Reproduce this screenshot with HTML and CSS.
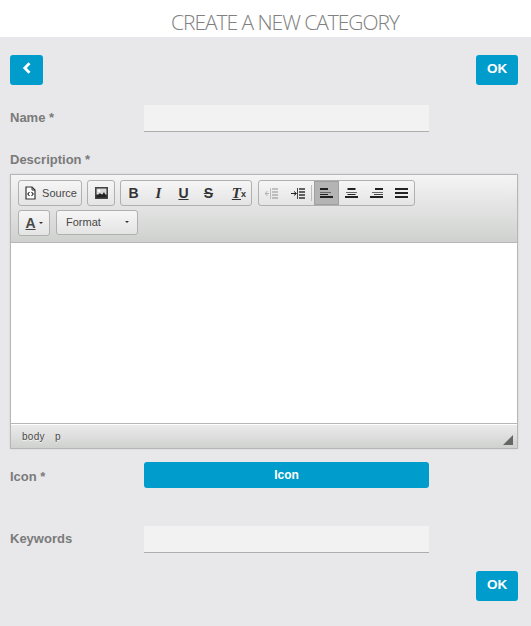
FILE: index.html
```html
<!DOCTYPE html>
<html lang="en">
<head>
<meta charset="utf-8">
<title>Create a new category</title>
<link rel="stylesheet" href="styles.css">
</head>
<body>
<header class="top"><h1 class="title">CREATE A NEW CATEGORY</h1></header>
<main class="page">
  <div class="actions">
    <button class="btn back" aria-label="Back"><svg width="10" height="12" viewBox="0 0 10 12"><path d="M7.500 1.200 2.800 6l4.700 4.800" fill="none" stroke="#fff" stroke-width="2.800"/></svg></button>
    <button class="btn ok">OK</button>
  </div>
  <div class="field name-row">
    <label class="label">Name *</label>
    <div class="input"></div>
  </div>
  <label class="label desc-label">Description *</label>
  <section class="editor">
    <div class="toolbar">
      <div class="row">
        <div class="group">
          <span class="tb source">
            <svg width="14" height="14" viewBox="0 0 14 14"><path d="M3 1h6l3 3v9H3z" fill="#fff" stroke="#333" stroke-width="1.200"/><path d="M9 1v3h3" fill="none" stroke="#333"/><path d="M6.500 6 4.800 8l1.700 2M8.500 6l1.700 2-1.700 2" fill="none" stroke="#222" stroke-width="1.100"/></svg>
            <span>Source</span>
          </span>
        </div>
        <div class="group">
          <span class="tb image">
            <svg width="13" height="12" viewBox="0 0 13 12"><rect x=".5" y=".5" width="12" height="11" fill="#333" stroke="#444"/><rect x="1.500" y="1.500" width="10" height="6" fill="#d8d8d8"/><circle cx="4" cy="3.800" r="1.300" fill="#fff"/><path d="M1.500 10 5 6l2 2 2-3 2.500 5z" fill="#222"/></svg>
          </span>
        </div>
        <div class="group">
          <span class="tb glyph b">B</span>
          <span class="tb glyph i">I</span>
          <span class="tb glyph u">U</span>
          <span class="tb glyph s">S</span>
          <span class="tb glyph tx"><span class="ti">T</span><span class="tsub">x</span></span>
        </div>
        <div class="group last">
          <span class="tb narrow">
            <svg width="14" height="11" viewBox="0 0 14 11" class="faded"><path d="M5.500 0v11" stroke="#777"/><path d="M7 1h6M7 4h6M7 7h6M7 10h6" stroke="#555" stroke-width="1.500"/><path d="M0 5.500h4" stroke="#555"/><path d="M2.500 3 0 5.500 2.500 8" fill="none" stroke="#555"/></svg>
          </span>
          <span class="tb narrow">
            <svg width="14" height="11" viewBox="0 0 14 11"><path d="M6.500 0v11" stroke="#444"/><path d="M8 1h6M8 4h6M8 7h6M8 10h6" stroke="#333" stroke-width="1.500"/><path d="M0 5.500h5" stroke="#222"/><path d="M3 3.500 5.500 5.500 3 7.500" fill="none" stroke="#222"/></svg>
          </span>
          <span class="sep"></span>
          <span class="tb al active">
            <svg width="13" height="10" viewBox="0 0 13 10"><path d="M0 1h8M0 9h13" stroke="#222" stroke-width="2"/><path d="M0 4.500h11" stroke="#666"/><path d="M0 6.500h8" stroke="#222"/></svg>
          </span>
          <span class="tb al">
            <svg width="13" height="10" viewBox="0 0 13 10"><path d="M2.500 1h8M0 9h13" stroke="#222" stroke-width="2"/><path d="M1 4.500h11" stroke="#666"/><path d="M2.500 6.500h8" stroke="#222"/></svg>
          </span>
          <span class="tb al">
            <svg width="13" height="10" viewBox="0 0 13 10"><path d="M5 1h8M0 9h13" stroke="#222" stroke-width="2"/><path d="M2 4.500h11" stroke="#666"/><path d="M4 6.500h9" stroke="#444"/></svg>
          </span>
          <span class="tb al">
            <svg width="13" height="10" viewBox="0 0 13 10"><path d="M0 1h13M0 5h13M0 9h13" stroke="#222" stroke-width="2"/></svg>
          </span>
        </div>
      </div>
      <div class="row row2">
        <div class="group">
          <span class="tb color"><span class="a">A</span><span class="caret"></span></span>
        </div>
        <div class="group combo">
          <span class="combo-text">Format</span><span class="caret"></span>
        </div>
      </div>
    </div>
    <div class="content"></div>
    <div class="status">
      <span class="crumb">body</span><span class="crumb">p</span>
      <svg class="grip" width="10" height="10" viewBox="0 0 10 10"><path d="M10 0v10H0z" fill="#666"/></svg>
    </div>
  </section>
  <div class="field icon-row">
    <label class="label">Icon *</label>
    <button class="btn icon-btn">Icon</button>
  </div>
  <div class="field keywords-row">
    <label class="label">Keywords</label>
    <div class="input"></div>
  </div>
  <div class="footer"><button class="btn ok">OK</button></div>
</main>
</body>
</html>
```
FILE: styles.css
```css
* { box-sizing: border-box; }
html, body { margin: 0; height: 100%; }
body { background: #e8e8ea; font-family: "Liberation Sans", Arial, sans-serif; color: #7a7a7a; }
.top { height: 37px; background: #fff; padding-left: 39px; }
.title { margin: 0; height: 37px; overflow: hidden; text-align: center; font: 300 21px/44px "Open Sans", sans-serif; color: #808080; letter-spacing: -1.05px; }
.page { padding: 18px 13px 25px 10px; }
.btn { border: 0; border-radius: 3px; background: #009ccc; color: #fff; font: 700 13.5px "Liberation Sans", sans-serif; padding: 0; display: flex; align-items: center; justify-content: center; }
.actions { display: flex; justify-content: space-between; height: 31px; }
.back { width: 33px; height: 30px; padding-bottom: 5px; }
.ok { width: 42px; height: 30px; padding-bottom: 3px; }
.field { display: flex; align-items: center; }
.label { font: 700 13px/16px "Liberation Sans", sans-serif; color: #7a7a7a; display: block; }
.field .label { width: 134px; flex: none; }
.input { width: 285px; height: 27px; background: #f2f2f2; border-bottom: 1px solid #adadad; }
.name-row { margin-top: 19px; }
.name-row .label, .keywords-row .label { padding-bottom: 2px; }
.desc-label { margin-top: 20px; }
.editor { margin-top: 6px; width: 508px; height: 275px; border: 1px solid #b6b6b6; background: #d1d3d1; display: flex; flex-direction: column; box-shadow: 0 0 2px rgba(0,0,0,.1); }
.toolbar { height: 68px; padding: 5px 7px 0; background: linear-gradient(#f4f4f4, #cfd1cf); border-bottom: 1px solid #b6b6b6; display: flex; flex-direction: column; gap: 4px; }
.row { display: flex; gap: 5px; height: 26px; }
.row2 { gap: 6px; }
.group { display: flex; align-items: stretch; border: 1px solid #b0b0b0; border-radius: 3px; background: linear-gradient(#f6f6f6, #e4e4e4); overflow: hidden; }
.last { margin-left: 1px; }
.tb { display: flex; align-items: center; justify-content: center; color: #333; }
.source { width: 62px; gap: 5px; font: 11px "Liberation Sans", sans-serif; color: #474747; }
.image { width: 26px; }
.glyph { width: 25px; font: 700 14px "Liberation Sans", sans-serif; }
.glyph.tx { width: 30px; justify-content: flex-end; padding-right: 5px; }
.i, .ti { font-family: "Liberation Serif", serif; font-style: italic; font-weight: 700; font-size: 15px; }
.u { text-decoration: underline; }
.s { text-decoration: line-through; }
.ti { text-decoration: underline; }
.tsub { font-size: 9px; align-self: flex-end; margin-bottom: 6px; }
.narrow { width: 26px; }
.faded { opacity: .4; }
.sep { width: 1px; margin: 4px 2px 4px 0; background: #bcbcbc; }
.al { width: 25px; }
.al.active { background: #b4b4b4; box-shadow: inset 0 0 0 1px #a0a0a0; }
.color { width: 30px; gap: 3px; }
.a { font: 700 14px "Liberation Sans", sans-serif; text-decoration: underline; color: #474747; }
.caret { display: block; width: 0; height: 0; border: 2px solid transparent; border-top-color: #333; border-bottom: 0; }
.combo { width: 82px; height: 25px; padding: 0 8px 2px 9px; display: flex; align-items: center; justify-content: space-between; font: 11px "Liberation Sans", sans-serif; color: #474747; }
.content { height: 180px; background: #fff; }
.status { flex: 1; border-top: 1px solid #b6b6b6; background: linear-gradient(#ececec, #cfd1cf); box-shadow: inset 0 1px 0 #fff; padding-left: 11px; display: flex; align-items: center; gap: 10px; font: 10px "Liberation Sans", sans-serif; letter-spacing: .3px; color: #484848; text-shadow: 0 1px 0 #f4f4f4; position: relative; }
.grip { position: absolute; right: 4px; bottom: 3px; }
.icon-row { margin-top: 13px; height: 26px; }
.icon-btn { width: 285px; height: 26px; font-size: 12px; }
.icon-row .label { padding-top: 3px; }
.keywords-row { margin-top: 38px; }
.footer { display: flex; justify-content: flex-end; margin-top: 18px; }
```
